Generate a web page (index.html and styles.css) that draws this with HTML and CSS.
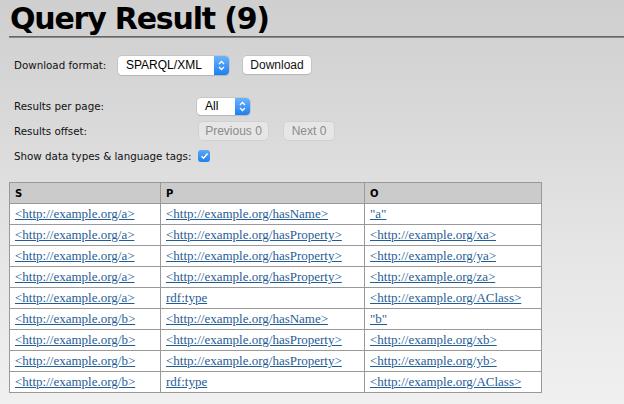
FILE: index.html
```html
<!DOCTYPE html>
<html>
<head>
<meta charset="utf-8">
<link rel="stylesheet" href="styles.css">
</head>
<body>
<h1 class="title">Query Result (9)</h1>
<div class="form">
  <div class="row dl">
    <span class="label w1">Download format:</span>
    <span class="select sel-format"><span class="sel-text">SPARQL/XML</span><span class="stepper"><svg width="7" height="11" viewBox="0 0 7 11"><path d="M1 4 L3.5 1.5 L6 4 M1 7 L3.5 9.5 L6 7" fill="none" stroke="#fff" stroke-width="1.3"/></svg></span></span>
    <span class="btn btn-dl">Download</span>
  </div>
  <div class="row r-per">
    <span class="label w2">Results per page:</span>
    <span class="select sel-all"><span class="sel-text">All</span><span class="stepper"><svg width="7" height="11" viewBox="0 0 7 11"><path d="M1 4 L3.5 1.5 L6 4 M1 7 L3.5 9.5 L6 7" fill="none" stroke="#fff" stroke-width="1.3"/></svg></span></span>
  </div>
  <div class="row r-off">
    <span class="label w2">Results offset:</span>
    <span class="btn dis prev">Previous 0</span>
    <span class="btn dis next">Next 0</span>
  </div>
  <div class="row r-show">
    <span class="label w2">Show data types &amp; language tags:</span>
    <span class="check"><svg width="9" height="8" viewBox="0 0 9 8"><path d="M1.5 4.2 L3.6 6.2 L7.5 1.6" fill="none" stroke="#fff" stroke-width="1.5"/></svg></span>
  </div>
</div>
<table class="results">
  <thead>
    <tr><th class="c1">S</th><th class="c2">P</th><th class="c3">O</th></tr>
  </thead>
  <tbody>
    <tr><td><a href="#">&lt;http://example.org/a&gt;</a></td><td><a href="#">&lt;http://example.org/hasName&gt;</a></td><td><a href="#">"a"</a></td></tr>
    <tr><td><a href="#">&lt;http://example.org/a&gt;</a></td><td><a href="#">&lt;http://example.org/hasProperty&gt;</a></td><td><a href="#">&lt;http://example.org/xa&gt;</a></td></tr>
    <tr><td><a href="#">&lt;http://example.org/a&gt;</a></td><td><a href="#">&lt;http://example.org/hasProperty&gt;</a></td><td><a href="#">&lt;http://example.org/ya&gt;</a></td></tr>
    <tr><td><a href="#">&lt;http://example.org/a&gt;</a></td><td><a href="#">&lt;http://example.org/hasProperty&gt;</a></td><td><a href="#">&lt;http://example.org/za&gt;</a></td></tr>
    <tr><td><a href="#">&lt;http://example.org/a&gt;</a></td><td><a href="#">rdf:type</a></td><td><a href="#">&lt;http://example.org/AClass&gt;</a></td></tr>
    <tr><td><a href="#">&lt;http://example.org/b&gt;</a></td><td><a href="#">&lt;http://example.org/hasName&gt;</a></td><td><a href="#">"b"</a></td></tr>
    <tr><td><a href="#">&lt;http://example.org/b&gt;</a></td><td><a href="#">&lt;http://example.org/hasProperty&gt;</a></td><td><a href="#">&lt;http://example.org/xb&gt;</a></td></tr>
    <tr><td><a href="#">&lt;http://example.org/b&gt;</a></td><td><a href="#">&lt;http://example.org/hasProperty&gt;</a></td><td><a href="#">&lt;http://example.org/yb&gt;</a></td></tr>
    <tr><td><a href="#">&lt;http://example.org/b&gt;</a></td><td><a href="#">rdf:type</a></td><td><a href="#">&lt;http://example.org/AClass&gt;</a></td></tr>
  </tbody>
</table>
</body>
</html>
```
FILE: styles.css
```css
html, body {
  margin: 0;
  padding: 0;
}
body {
  width: 624px;
  height: 404px;
  overflow: hidden;
  background: linear-gradient(to bottom, #cfcfcf 0px, #d9d9d9 120px, #e6e6e6 260px, #f0f0f0 404px);
  font-family: "DejaVu Sans", sans-serif;
  color: #000;
}
.title {
  margin: 0 0 0 9px;
  padding: 0 0 0 1px;
  height: 36px;
  font-family: "DejaVu Sans", sans-serif;
  font-weight: bold;
  font-size: 30px;
  line-height: 38px;
  letter-spacing: -1.2px;
  border-bottom: 1px solid #666;
  box-shadow: 0 1px 0 #888;
  overflow: hidden;
}
.form {
  padding: 18px 0 0 14px;
  font-size: 10px;
}
.row {
  display: flex;
  align-items: center;
}
.label {
  display: inline-block;
  font-size: 10.3px;
  color: #111;
}
.w1 { width: 104px; }
.w2 { width: 183px; }
.dl { height: 20px; }
.r-per { height: 18px; margin-top: 22px; }
.r-off { height: 18px; margin-top: 7px; }
.r-show { height: 14px; margin-top: 9px; }
.select {
  display: inline-flex;
  align-items: center;
  box-sizing: border-box;
  height: 19px;
  background: #fff;
  border-radius: 4px;
  box-shadow: 0 0 0 0.5px #b5b5b5, 0 1px 1px rgba(0,0,0,0.15);
  overflow: hidden;
  font-family: "Liberation Sans", sans-serif;
  font-size: 12px;
}
.sel-text {
  flex: 1;
  padding-left: 8px;
}
.stepper {
  width: 15px;
  height: 19px;
  background: linear-gradient(#6cb3fa, #1d7ff0);
  display: flex;
  align-items: center;
  justify-content: center;
}
.sel-format { width: 111px; }
.sel-all { width: 53px; height: 17px; }
.sel-all .stepper { height: 17px; }
.btn {
  display: inline-flex;
  align-items: center;
  justify-content: center;
  box-sizing: border-box;
  height: 18px;
  background: #fff;
  border-radius: 4px;
  box-shadow: 0 0 0 0.5px #b5b5b5, 0 1px 1px rgba(0,0,0,0.15);
  font-family: "Liberation Sans", sans-serif;
  font-size: 12px;
  color: #111;
}
.btn-dl { width: 68px; margin-left: 14px; }
.dis {
  background: #e6e6e6;
  color: #8a8a8a;
  box-shadow: 0 0 0 0.5px #c8c8c8;
}
.prev { width: 69px; margin-left: 2px; }
.next { width: 50px; margin-left: 16px; }
.check {
  display: inline-flex;
  align-items: center;
  justify-content: center;
  width: 12px;
  height: 12px;
  border-radius: 3px;
  background: linear-gradient(#5aa8f8, #1f7ff0);
  margin-left: 1px;
}
.results {
  margin: 19px 0 0 9px;
  width: 533px;
  border-collapse: collapse;
  border: 1px solid #999;
}
.results th, .results td {
  border: 1px solid #999;
  height: 21px;
  padding: 0 0 0 5px;
  text-align: left;
  box-sizing: border-box;
}
.results th {
  background: #cbcbcb;
  font-family: "DejaVu Sans", sans-serif;
  font-size: 10px;
  font-weight: bold;
  height: 21px;
}
.results td {
  background: #fff;
  font-family: "Liberation Serif", serif;
  font-size: 13px;
}
.c1 { width: 151px; }
.c2 { width: 204px; }
.results a {
  color: #1f5d96;
  text-decoration: underline;
}
```
